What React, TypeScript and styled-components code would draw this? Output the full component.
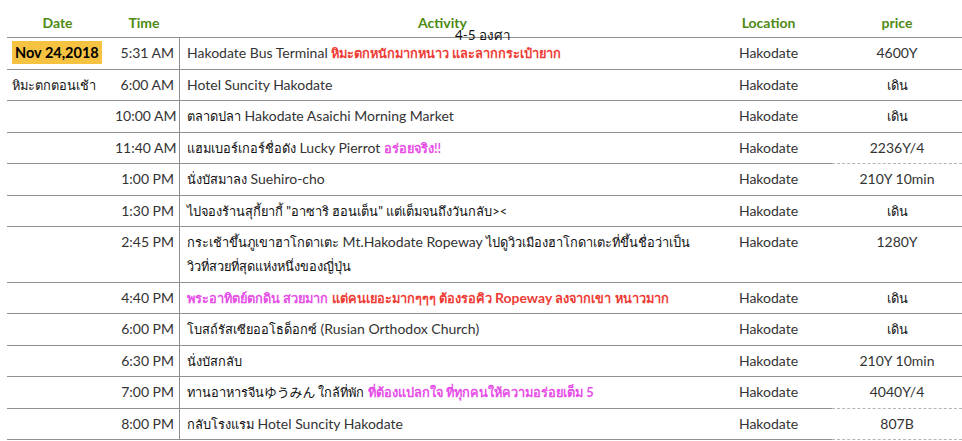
import styled, { createGlobalStyle } from "styled-components";

const GlobalStyle = createGlobalStyle`
  body {
    margin: 0;
    background: #ffffff;
    font-family: Lato, "Noto Sans", "Noto Sans CJK JP", sans-serif;
    color: #333333;
  }
`;

const Sheet = styled.div`
  position: relative;
  width: 962px;
  padding-left: 7px;
  box-sizing: border-box;
`;

const Table = styled.div`
  display: grid;
  grid-template-columns: 101px 72px 525px 127px 130px;
`;

const HeadCell = styled.div`
  height: 38px;
  display: flex;
  align-items: center;
  justify-content: center;
  padding-top: 7px;
  box-sizing: border-box;
  border-bottom: 1px solid #8f8f8f;
  font-weight: 700;
  font-size: 14px;
  color: #4e8a14;
`;

const Cell = styled.div<{ $align?: string; $dashed?: boolean; $divider?: boolean }>`
  padding: 3px 7px 3.5px;
  line-height: 24px;
  font-size: 14px;
  text-align: ${(p) => p.$align || "left"};
  border-bottom: 1px ${(p) => (p.$dashed ? "dashed #b5b5b5" : "solid #8f8f8f")};
  border-right: ${(p) => (p.$divider ? "1px solid #8f8f8f" : "none")};
  color: #333333;
  white-space: nowrap;
  min-width: 0;
`;

const DateCell = styled(Cell)`
  padding-left: 5px;
  color: #111111;
`;

const TimeCell = styled(Cell)`
  padding-right: 5px;
`;

const DateTag = styled.span`
  display: inline-block;
  background: #f5c242;
  color: #000000;
  font-weight: 700;
  font-size: 14.5px;
  padding: 0 3px;
  line-height: 23px;
`;

const Thai = styled.span`
  color: #111111;
  font-size: 12.8px;
`;

const Latin = styled.span`
  font-size: 14px;
`;

const Accent = styled.span<{ $tone: "red" | "pink" }>`
  font-weight: 700;
  font-size: 12.8px;
  color: ${(p) => (p.$tone === "red" ? "#ee3d36" : "#e650e6")};
`;

const Price = styled.span<{ $thai?: boolean }>`
  color: ${(p) => (p.$thai ? "#111111" : "#333333")};
  font-size: ${(p) => (p.$thai ? "12.8px" : "14px")};
`;

const FloatNote = styled.div`
  position: absolute;
  left: 455px;
  top: 24px;
  font-size: 13.5px;
  color: #111111;
  white-space: nowrap;
`;

type Row = {
  date?: React.ReactNode;
  time: string;
  activity: React.ReactNode;
  price: string;
  dashed?: boolean;
};

const rows: Row[] = [
  {
    date: <DateTag>Nov 24,2018</DateTag>,
    time: "5:31 AM",
    activity: (
      <>
        Hakodate Bus Terminal <Accent $tone="red">หิมะตกหนักมากหนาว และลากกระเป๋ายาก</Accent>
      </>
    ),
    price: "4600Y",
  },
  { date: <Thai>หิมะตกตอนเช้า</Thai>, time: "6:00 AM", activity: "Hotel Suncity Hakodate", price: "เดิน" },
  {
    time: "10:00 AM",
    activity: (
      <>
        <Thai>ตลาดปลา</Thai> Hakodate Asaichi Morning Market
      </>
    ),
    price: "เดิน",
  },
  {
    time: "11:40 AM",
    activity: (
      <>
        <Thai>แฮมเบอร์เกอร์ชื่อดัง</Thai> Lucky Pierrot <Accent $tone="pink">อร่อยจริง!!</Accent>
      </>
    ),
    price: "2236Y/4",
    dashed: true,
  },
  {
    time: "1:00 PM",
    activity: (
      <>
        <Thai>นั่งบัสมาลง</Thai> Suehiro-cho
      </>
    ),
    price: "210Y 10min",
  },
  {
    time: "1:30 PM",
    activity: <Thai>ไปจองร้านสุกี้ยากี้ "อาซาริ ฮอนเต็น" แต่เต็มจนถึงวันกลับ&gt;&lt;</Thai>,
    price: "เดิน",
  },
  {
    time: "2:45 PM",
    activity: (
      <>
        <Thai>กระเช้าขึ้นภูเขาฮาโกดาเตะ</Thai> Mt.Hakodate Ropeway{" "}
        <Thai>ไปดูวิวเมืองฮาโกดาเตะที่ขึ้นชื่อว่าเป็น</Thai>
        <br />
        <Thai>วิวที่สวยที่สุดแห่งหนึ่งของญี่ปุ่น</Thai>
      </>
    ),
    price: "1280Y",
  },
  {
    time: "4:40 PM",
    activity: (
      <>
        <Accent $tone="pink">พระอาทิตย์ตกดิน สวยมาก</Accent>{" "}
        <Accent $tone="red">
          แต่คนเยอะมากๆๆๆ ต้องรอคิว <Latin>Ropeway</Latin> ลงจากเขา หนาวมาก
        </Accent>
      </>
    ),
    price: "เดิน",
  },
  {
    time: "6:00 PM",
    activity: (
      <>
        <Thai>โบสถ์รัสเซียออโธด็อกซ์</Thai> (Rusian Orthodox Church)
      </>
    ),
    price: "เดิน",
  },
  { time: "6:30 PM", activity: <Thai>นั่งบัสกลับ</Thai>, price: "210Y 10min" },
  {
    time: "7:00 PM",
    activity: (
      <>
        <Thai>ทานอาหารจีนゆうみん ใกล้ที่พัก</Thai>{" "}
        <Accent $tone="pink">ที่ต้องแปลกใจ ที่ทุกคนให้ความอร่อยเต็ม 5</Accent>
      </>
    ),
    price: "4040Y/4",
    dashed: true,
  },
  {
    time: "8:00 PM",
    activity: (
      <>
        <Thai>กลับโรงแรม</Thai> Hotel Suncity Hakodate
      </>
    ),
    price: "807B",
    dashed: true,
  },
];

export default function App() {
  return (
    <Sheet>
      <GlobalStyle />
      <Table>
        <HeadCell>Date</HeadCell>
        <HeadCell>Time</HeadCell>
        <HeadCell>Activity</HeadCell>
        <HeadCell>Location</HeadCell>
        <HeadCell>price</HeadCell>
        {rows.map((r) => (
          <>
            <DateCell key={r.time + "d"}>{r.date}</DateCell>
            <TimeCell key={r.time + "t"} $align="right" $divider>
              {r.time}
            </TimeCell>
            <Cell key={r.time + "a"}>{r.activity}</Cell>
            <Cell key={r.time + "l"} $align="center">
              Hakodate
            </Cell>
            <Cell key={r.time + "p"} $align="center" $dashed={r.dashed}>
              <Price $thai={r.price === "เดิน"}>{r.price}</Price>
            </Cell>
          </>
        ))}
      </Table>
      <FloatNote>4-5 องศา</FloatNote>
    </Sheet>
  );
}
